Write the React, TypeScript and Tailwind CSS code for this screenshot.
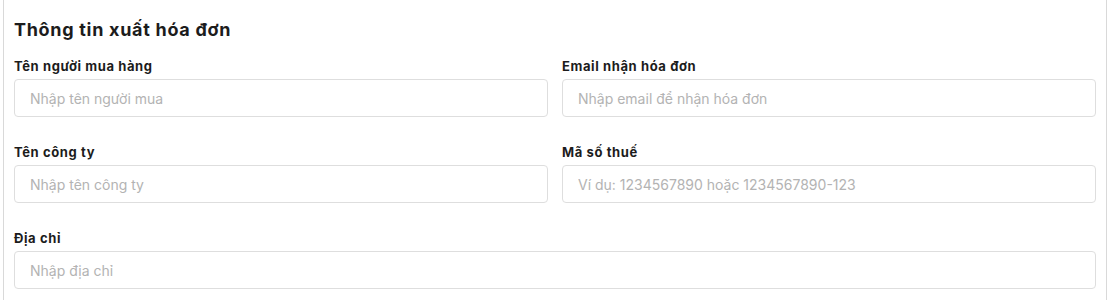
import React from 'react'

const FONT = { fontFamily: 'Inter, "Noto Sans", sans-serif' }

function Field({ label, placeholder }: { label: string; placeholder: string }) {
  return (
    <div className="flex flex-col gap-[3px]">
      <label className="text-[13px] leading-5 font-bold tracking-[0.6px] text-[#1c1c1c]">{label}</label>
      <input
        type="text"
        placeholder={placeholder}
        className="h-[38px] w-full rounded-[4px] border border-[#dedede] bg-white px-[15px] text-[14px] text-[#333] outline-none placeholder:text-[#b3b3b3]"
      />
    </div>
  )
}

export default function App() {
  return (
    <div className="min-h-[300px] bg-white" style={FONT}>
      <div className="ml-[3px] w-[1104px] min-h-[300px] border-x border-[#d9d9d9] px-[10px] pt-4">
        <h2 className="text-[18px] leading-7 font-bold tracking-[0.7px] text-[#1c1c1c]">Thông tin xuất hóa đơn</h2>
        <div className="mt-3 grid grid-cols-2 gap-x-[14px] gap-y-[25px]">
          <Field label="Tên người mua hàng" placeholder="Nhập tên người mua" />
          <Field label="Email nhận hóa đơn" placeholder="Nhập email để nhận hóa đơn" />
          <Field label="Tên công ty" placeholder="Nhập tên công ty" />
          <Field label="Mã số thuế" placeholder="Ví dụ: 1234567890 hoặc 1234567890-123" />
          <div className="col-span-2">
            <Field label="Địa chỉ" placeholder="Nhập địa chỉ" />
          </div>
        </div>
      </div>
    </div>
  )
}
